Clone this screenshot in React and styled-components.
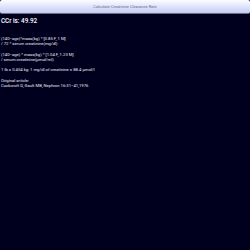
import React from "react";
import styled, { createGlobalStyle } from "styled-components";

const Global = createGlobalStyle`
  html, body { margin: 0; padding: 0; background: #00001e; }
  body { width: 250px; height: 250px; overflow: hidden; font-family: Roboto, "Liberation Sans", sans-serif; }
`;

const Screen = styled.div`
  width: 250px;
  height: 250px;
  background: #00001e;
  display: flex;
  flex-direction: column;
`;

const CalcButton = styled.button`
  margin: 0;
  height: 14px;
  width: 250px;
  padding: 0;
  border: none;
  border-radius: 2px;
  border-bottom: 1px solid #6a6f80;
  background: linear-gradient(#fbfcff, #c4ccf6);
  color: #6b6f7c;
  font-family: Roboto, "Liberation Sans", sans-serif;
  font-size: 4px;
  line-height: 13px;
  text-align: center;
`;

const Result = styled.div`
  color: #ffffff;
  font-size: 6.3px;
  font-weight: 500;
  line-height: 8px;
  padding: 3px 0 0 1px;
`;

const Notes = styled.div`
  color: #ececf2;
  font-size: 4.2px;
  line-height: 5.2px;
  padding: 11px 0 0 1px;
  display: flex;
  flex-direction: column;
`;

const Line = styled.div`
  min-height: 5.2px;
  white-space: pre;
`;

const lines = [
  "(140−age)*mass(kg) * [0.85 F, 1 M]",
  "/ 72 * serum creatinine(mg/dl)",
  "",
  "(140−age) * mass(kg) * [1.04 F, 1.23 M]",
  "/ serum creatinine(µmol/ml)",
  "",
  "1 lb = 0.454 kg; 1 mg/dl of creatinine = 88.4 µmol/l",
  "",
  "Original article:",
  "Cockcroft D, Gault MB, Nephron 16:31−41,1976",
];

export default function App() {
  return (
    <Screen>
      <Global />
      <CalcButton>Calculate Creatinine Clearance Rate</CalcButton>
      <Result>CCr is: 49.92</Result>
      <Notes>
        {lines.map((l, i) => (
          <Line key={i}>{l}</Line>
        ))}
      </Notes>
    </Screen>
  );
}
